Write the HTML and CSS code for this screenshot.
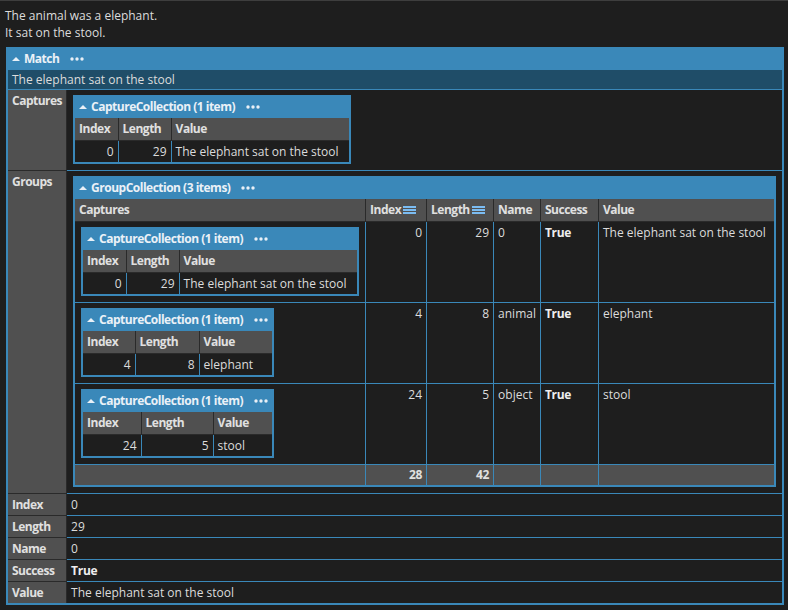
FILE: index.html
```html
<!DOCTYPE html>
<html>
<head>
<meta charset="utf-8">
<link rel="stylesheet" href="styles.css">
</head>
<body>
<div class="out">The animal was a elephant.<br>It sat on the stool.</div>

<table class="obj outer">
  <tr><td colspan="2" class="hdr"><svg class="tri" width="8" height="4" viewBox="0 0 8 4"><path d="M0 4 L4 0 L8 4 Z" fill="#e8f0f7"/></svg>Match<svg class="dots" width="14" height="4" viewBox="0 0 14 4"><circle cx="2" cy="2" r="1.7" fill="#e8f0f7"/><circle cx="7" cy="2" r="1.7" fill="#e8f0f7"/><circle cx="12" cy="2" r="1.7" fill="#e8f0f7"/></svg></td></tr>
  <tr><td colspan="2" class="summary">The elephant sat on the stool</td></tr>
  <tr>
    <th class="lbl">Captures</th>
    <td class="nest">
      <table class="obj cap capw1">
        <tr><td colspan="3" class="hdr"><svg class="tri" width="8" height="4" viewBox="0 0 8 4"><path d="M0 4 L4 0 L8 4 Z" fill="#e8f0f7"/></svg>CaptureCollection (1 item)<svg class="dots" width="14" height="4" viewBox="0 0 14 4"><circle cx="2" cy="2" r="1.7" fill="#e8f0f7"/><circle cx="7" cy="2" r="1.7" fill="#e8f0f7"/><circle cx="12" cy="2" r="1.7" fill="#e8f0f7"/></svg></td></tr>
        <tr><th class="ca1">Index</th><th class="cb1">Length</th><th>Value</th></tr>
        <tr><td class="num">0</td><td class="num">29</td><td>The elephant sat on the stool</td></tr>
      </table>
    </td>
  </tr>
  <tr>
    <th class="lbl">Groups</th>
    <td class="nest">
      <table class="obj grp">
        <tr><td colspan="6" class="hdr"><svg class="tri" width="8" height="4" viewBox="0 0 8 4"><path d="M0 4 L4 0 L8 4 Z" fill="#e8f0f7"/></svg>GroupCollection (3 items)<svg class="dots" width="14" height="4" viewBox="0 0 14 4"><circle cx="2" cy="2" r="1.7" fill="#e8f0f7"/><circle cx="7" cy="2" r="1.7" fill="#e8f0f7"/><circle cx="12" cy="2" r="1.7" fill="#e8f0f7"/></svg></td></tr>
        <tr>
          <th class="g-cap">Captures</th>
          <th class="g-idx">Index<svg class="ham" width="13" height="8" viewBox="0 0 13 8"><rect x="0" y="0" width="13" height="2" fill="#7bbcf2"/><rect x="0" y="3" width="13" height="2" fill="#7bbcf2"/><rect x="0" y="6" width="13" height="2" fill="#7bbcf2"/></svg></th>
          <th class="g-len">Length<svg class="ham" width="13" height="8" viewBox="0 0 13 8"><rect x="0" y="0" width="13" height="2" fill="#7bbcf2"/><rect x="0" y="3" width="13" height="2" fill="#7bbcf2"/><rect x="0" y="6" width="13" height="2" fill="#7bbcf2"/></svg></th>
          <th class="g-name">Name</th>
          <th class="g-suc">Success</th>
          <th>Value</th>
        </tr>
        <tr>
          <td class="nest">
            <table class="obj cap capw1">
              <tr><td colspan="3" class="hdr"><svg class="tri" width="8" height="4" viewBox="0 0 8 4"><path d="M0 4 L4 0 L8 4 Z" fill="#e8f0f7"/></svg>CaptureCollection (1 item)<svg class="dots" width="14" height="4" viewBox="0 0 14 4"><circle cx="2" cy="2" r="1.7" fill="#e8f0f7"/><circle cx="7" cy="2" r="1.7" fill="#e8f0f7"/><circle cx="12" cy="2" r="1.7" fill="#e8f0f7"/></svg></td></tr>
              <tr><th class="ca1">Index</th><th class="cb1">Length</th><th>Value</th></tr>
              <tr><td class="num">0</td><td class="num">29</td><td>The elephant sat on the stool</td></tr>
            </table>
          </td>
          <td class="num">0</td><td class="num">29</td><td>0</td><td class="b">True</td><td>The elephant sat on the stool</td>
        </tr>
        <tr>
          <td class="nest">
            <table class="obj cap capw2">
              <tr><td colspan="3" class="hdr"><svg class="tri" width="8" height="4" viewBox="0 0 8 4"><path d="M0 4 L4 0 L8 4 Z" fill="#e8f0f7"/></svg>CaptureCollection (1 item)<svg class="dots" width="14" height="4" viewBox="0 0 14 4"><circle cx="2" cy="2" r="1.7" fill="#e8f0f7"/><circle cx="7" cy="2" r="1.7" fill="#e8f0f7"/><circle cx="12" cy="2" r="1.7" fill="#e8f0f7"/></svg></td></tr>
              <tr><th class="ca2">Index</th><th class="cb2">Length</th><th>Value</th></tr>
              <tr><td class="num">4</td><td class="num">8</td><td>elephant</td></tr>
            </table>
          </td>
          <td class="num">4</td><td class="num">8</td><td>animal</td><td class="b">True</td><td>elephant</td>
        </tr>
        <tr>
          <td class="nest">
            <table class="obj cap capw2">
              <tr><td colspan="3" class="hdr"><svg class="tri" width="8" height="4" viewBox="0 0 8 4"><path d="M0 4 L4 0 L8 4 Z" fill="#e8f0f7"/></svg>CaptureCollection (1 item)<svg class="dots" width="14" height="4" viewBox="0 0 14 4"><circle cx="2" cy="2" r="1.7" fill="#e8f0f7"/><circle cx="7" cy="2" r="1.7" fill="#e8f0f7"/><circle cx="12" cy="2" r="1.7" fill="#e8f0f7"/></svg></td></tr>
              <tr><th class="ca3">Index</th><th class="cb3">Length</th><th>Value</th></tr>
              <tr><td class="num">24</td><td class="num">5</td><td>stool</td></tr>
            </table>
          </td>
          <td class="num">24</td><td class="num">5</td><td>object</td><td class="b">True</td><td>stool</td>
        </tr>
        <tr class="tot">
          <td></td><td class="num">28</td><td class="num">42</td><td></td><td></td><td></td>
        </tr>
      </table>
    </td>
  </tr>
  <tr><th class="lbl">Index</th><td>0</td></tr>
  <tr><th class="lbl">Length</th><td>29</td></tr>
  <tr><th class="lbl">Name</th><td>0</td></tr>
  <tr><th class="lbl">Success</th><td class="b">True</td></tr>
  <tr><th class="lbl">Value</th><td>The elephant sat on the stool</td></tr>
</table>
</body>
</html>
```

FILE: styles.css
```css
* { box-sizing: border-box; }

body {
  margin: 0;
  background: #1e1e1e;
  color: #dcdcdc;
  font-family: "Open Sans", "Noto Sans", sans-serif;
  font-size: 12px;
  line-height: 17px;
  border-top: 1px solid #3e3e3e;
}

.out {
  padding: 6px 5px 0;
}

table.obj {
  border-collapse: collapse;
  border: 2px solid #3a88b9;
}

.outer {
  margin: 6px 0 0 6px;
  width: 775px;
}

td, th {
  padding: 2px 4px;
  vertical-align: top;
  text-align: left;
  white-space: nowrap;
}

td {
  border: 1px solid #3a88b9;
}

th {
  background: #505050;
  border: 1px solid #2a2a2a;
  font-weight: bold;
  letter-spacing: -0.5px;
  color: #e0e0e0;
  padding: 2px 4px 3px;
}

th.lbl {
  width: 52px;
  padding: 2px 4px;
}

.hdr {
  background: #3a88b9;
  color: #eaf1f7;
  font-weight: bold;
  letter-spacing: -0.5px;
  padding: 1px 4px 2px 4px;
}

.tri {
  margin: 0 4px 2px 0;
  vertical-align: middle;
}

.dots {
  margin-left: 11px;
  vertical-align: middle;
  margin-bottom: 2px;
}

.ham {
  margin-left: 2px;
  vertical-align: middle;
  margin-bottom: 2px;
}

.summary {
  background: #1f4d68;
  padding: 1px 4px;
}

.num {
  text-align: right;
}

.b {
  font-weight: bold;
  letter-spacing: -0.3px;
  color: #eeeeee;
}

.nest {
  padding: 5px 6px 6px;
}

.capw1 { width: 278px; }
.capw2 { width: 193px; }
.ca1 { width: 44px; }
.cb1 { width: 53px; }
.ca2 { width: 53px; }
.cb2 { width: 64px; }
.ca3 { width: 59px; }
.cb3 { width: 72px; }

.grp { width: 703px; }
.g-cap { width: 290px; }
.g-idx { width: 61px; }
.g-len { width: 67px; }
.g-name { width: 46px; }
.g-suc { width: 58px; }

.tot td {
  background: #505050;
  font-weight: bold;
  letter-spacing: -0.3px;
  color: #e0e0e0;
  padding: 1px 4px 2px;
}
```
